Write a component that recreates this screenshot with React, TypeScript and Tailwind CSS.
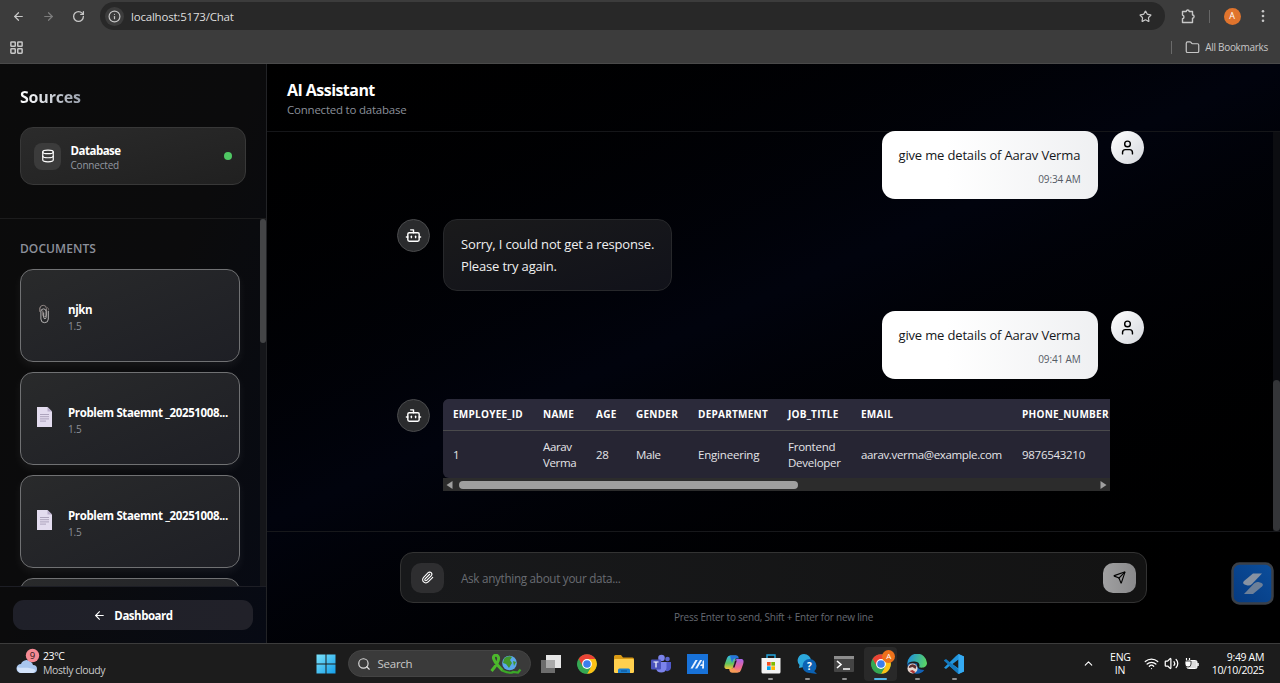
import React from "react";
import {
  ArrowLeft,
  ArrowRight,
  Bot,
  ChevronUp,
  Database,
  Folder,
  Info,
  LayoutGrid,
  Paperclip,
  RotateCw,
  Search,
  Send,
  Star,
  User,
  Volume2,
  Wifi,
} from "lucide-react";

function BrowserBar() {
  return (
    <header className="flex h-16 shrink-0 flex-col border-b border-[#4a4a4a] bg-[#3c3c3c] text-[#c7c7c7]">
      <div className="flex h-8 items-center">
        <div className="flex w-[100px] shrink-0 items-center gap-[17px] pl-[12px]">
          <ArrowLeft size={13} strokeWidth={2.2} />
          <ArrowRight size={13} strokeWidth={2.2} className="text-[#7d7d7d]" />
          <RotateCw size={13} strokeWidth={2.4} />
        </div>
        <div className="flex h-7 w-[1065px] shrink-0 items-center rounded-full bg-[#282828] pr-[13px] pl-[5px]">
          <span className="flex h-[19px] w-[19px] items-center justify-center rounded-full bg-[#3c3c3c]">
            <Info size={13} strokeWidth={2.2} />
          </span>
          <span className="ml-[7px] flex-1 pt-px text-[11.5px] tracking-[-0.2px] text-[#dedede]">
            localhost:5173/Chat
          </span>
          <Star size={13} strokeWidth={2.2} />
        </div>
        <div className="flex flex-1 items-center pl-[15.5px]">
          <svg width="15" height="15" viewBox="0 0 15 15" fill="none" stroke="#c7c7c7" strokeWidth="1.4">
            <path d="M1.500 2.500h3.700a1.500 1.500 0 0 1 3 0h3.300v3.500a1.500 1.500 0 0 1 0 3.200v4.300h-10v-3.700a1.900 1.900 0 0 0 0-3.700z" strokeLinejoin="round" />
          </svg>
          <span className="ml-[13px] h-[13px] w-px bg-[#666]" />
          <span className="ml-[14px] flex h-[17px] w-[17px] items-center justify-center rounded-full bg-[#e0742d] text-[9px] text-white">
            A
          </span>
          <svg className="ml-[20px]" width="4" height="14" fill="#c7c7c7">
            <circle cx="2" cy="2.3" r="1.3" />
            <circle cx="2" cy="7" r="1.3" />
            <circle cx="2" cy="11.7" r="1.3" />
          </svg>
        </div>
      </div>
      <div className="flex flex-1 items-center pr-3 pb-px pl-[9px]">
        <LayoutGrid size={15} strokeWidth={2.4} />
        <span className="ml-auto h-[13px] w-px bg-[#6a6a6a]" />
        <Folder size={15} strokeWidth={1.9} className="mr-[5px] ml-[13px]" />
        <span className="text-[10px] tracking-[-0.3px]">All Bookmarks</span>
      </div>
    </header>
  );
}

function PageIcon() {
  return (
    <svg width="15" height="20" viewBox="0 0 15 20">
      <path d="M0 0h10.500l4.500 4.500v15.500h-15z" fill="#e3dcef" />
      <path d="M10.500 0v4.500h4.500z" fill="#b9aecb" />
      <path d="M3 7.500h9M3 9.700h9M3 11.900h9M3 14.100h6" stroke="#9e94ae" strokeWidth="0.800" />
    </svg>
  );
}

function ClipsIcon() {
  return (
    <svg width="15" height="20" viewBox="0 0 15 20" fill="none" strokeWidth="1">
      <path d="M3 8V4.500a3.200 3.200 0 0 1 6.400 0V11a1.800 1.800 0 0 1-3.600 0V6.500" stroke="#8f8583" />
      <path d="M11.300 7v8a3.700 3.700 0 0 1-7.400 0V7.500a2.600 2.600 0 0 1 5.200 0v6a1.200 1.200 0 0 1-2.400 0V8.500" stroke="#b4b2b2" />
      <path d="M2.500 3.500v4M10 3.500a2 2 0 0 1 1.300 3" stroke="#776e6c" />
    </svg>
  );
}

const documents = [
  { name: "njkn", size: "1.5", clip: true },
  { name: "Problem Staemnt _20251008...", size: "1.5", clip: false },
  { name: "Problem Staemnt _20251008...", size: "1.5", clip: false },
];

const cardClass =
  "flex h-[93px] shrink-0 items-center rounded-[13px] border border-[#707173] bg-gradient-to-br from-[#292a2b] to-[#1e1f25] pl-[16px] shadow-[0_4px_10px_rgba(255,255,255,0.06)]";

function Sidebar() {
  return (
    <aside className="flex w-[267px] shrink-0 flex-col border-r border-[#222326] bg-gradient-to-br from-[#0b0b0b] via-[#0b0b0c] to-[#070a14]">
      <section className="h-[155px] shrink-0 border-b border-[#1c1c1d] px-5 pt-[20px]">
        <h2 className="w-fit bg-gradient-to-r from-white to-[#9ca3af] bg-clip-text text-[16px] leading-[26px] font-bold tracking-[-0.2px] text-transparent">
          Sources
        </h2>
        <div className="mt-[17px] flex h-[58px] w-[226px] items-center rounded-[13px] border border-[#383838] bg-gradient-to-br from-[#2b2b2b] to-[#202020] px-[13px]">
          <div className="flex h-[27px] w-[27px] items-center justify-center rounded-[8px] bg-[#3b3b3b]">
            <Database size={14} className="text-white" />
          </div>
          <div className="ml-[9.500px] flex-1 pt-[2px]">
            <p className="text-[11.500px] leading-[16px] font-bold tracking-[-0.5px] text-white">Database</p>
            <p className="text-[10px] leading-[13px] tracking-[-0.2px] text-[#9297a0]">Connected</p>
          </div>
          <span className="h-2 w-2 rounded-full bg-[#4fc763]" />
        </div>
      </section>
      <section className="flex min-h-0 flex-1 overflow-hidden">
        <div className="flex-1 px-5 pt-[21px]">
          <h3 className="text-[12px] leading-[18px] font-semibold tracking-[0.080px] text-[#8b909a]">DOCUMENTS</h3>
          <div className="mt-[11px] flex w-[220px] flex-col gap-[10px]">
            {documents.map((doc, i) => (
              <div key={i} className={cardClass}>
                <div className="flex w-[31px] shrink-0 pb-[3px]">{doc.clip ? <ClipsIcon /> : <PageIcon />}</div>
                <div className="w-[162px] pt-[3px] whitespace-nowrap">
                  <p className="text-[11.500px] leading-[17px] font-bold tracking-[-0.380px] text-white">{doc.name}</p>
                  <p className="pt-px text-[10px] leading-[15px] tracking-[-0.2px] text-[#8d9097]">{doc.size}</p>
                </div>
              </div>
            ))}
            <div className={cardClass} />
          </div>
        </div>
        <div className="w-[7px] bg-[#15161a]">
          <div className="h-[124px] rounded-full bg-[#444547]" />
        </div>
      </section>
      <footer className="h-[57px] shrink-0 border-t border-[#1d1e25] pt-[13px] pl-[13px]">
        <button className="flex h-[30px] w-[240px] items-center justify-center gap-[8px] rounded-[11px] bg-gradient-to-r from-[#1f2029] to-[#212129] pt-px text-[11.500px] font-bold tracking-[-0.480px] text-white">
          <ArrowLeft size={13} />
          Dashboard
        </button>
      </footer>
    </aside>
  );
}

function UserMessage({ text, time }: { text: string; time: string }) {
  return (
    <div className="flex justify-end gap-[13px]">
      <div className="h-[68px] w-[216px] rounded-[13px] bg-gradient-to-r from-white from-30% to-[#eff0f2] pt-[13px] pr-[17px] pl-[17px] whitespace-nowrap">
        <p className="text-[13px] leading-[22px] tracking-[-0.160px] text-[#15171b]">{text}</p>
        <p className="mt-[6px] text-right text-[10px] leading-[15px] tracking-[-0.150px] text-[#555b66]">{time}</p>
      </div>
      <div className="flex h-[33px] w-[33px] items-center justify-center rounded-full bg-gradient-to-br from-white to-[#d5d8dd]">
        <User size={17} className="text-black" />
      </div>
    </div>
  );
}

function BotAvatar() {
  return (
    <div className="flex h-[33px] w-[33px] shrink-0 items-center justify-center rounded-full border border-[#4a4b4d] bg-[#2a2b2d]">
      <Bot size={17} className="text-white" />
    </div>
  );
}

function ResultTable() {
  return (
    <div className="w-[667px] overflow-hidden text-white">
      <div className="rounded-bl-[6px] rounded-tl-[6px] bg-[#262533]">
        <div className="grid h-[32px] grid-cols-[90px_53px_40px_62px_90px_73px_161px_98px] items-center rounded-tl-[6px] border-b border-[#4a4a4c] bg-[#2b2a3a] text-[10px] font-bold tracking-[0.250px] whitespace-nowrap">
          {["EMPLOYEE_ID", "NAME", "AGE", "GENDER", "DEPARTMENT", "JOB_TITLE", "EMAIL", "PHONE_NUMBER"].map((h) => (
            <span key={h} className="pl-[10px]">
              {h}
            </span>
          ))}
        </div>
        <div className="grid h-[47.500px] grid-cols-[90px_53px_40px_62px_90px_73px_161px_98px] items-center pt-[2px] text-[11.500px] leading-[16.500px] tracking-[-0.350px] whitespace-nowrap text-[#e4e4e8]">
          <span className="pl-[10px]">1</span>
          <span className="pl-[10px]">
            Aarav
            <br />
            Verma
          </span>
          <span className="pl-[10px]">28</span>
          <span className="pl-[10px]">Male</span>
          <span className="pl-[10px] tracking-[-0.2px]">Engineering</span>
          <span className="pl-[10px] tracking-[-0.250px]">
            Frontend
            <br />
            Developer
          </span>
          <span className="pl-[10px]">aarav.verma@example.com</span>
          <span className="pl-[10px] tracking-[-0.280px]">9876543210</span>
        </div>
      </div>
      <div className="flex h-[13px] items-center bg-[#2c2c2c] px-[3px]">
        <svg width="7" height="8">
          <path d="M6.500 0v8L0.500 4z" fill="#9f9f9f" />
        </svg>
        <div className="ml-[6px] h-[8px] w-[339px] rounded-full bg-[#9f9f9f]" />
        <svg width="7" height="8" className="ml-auto">
          <path d="M0.500 0v8l6-4z" fill="#9f9f9f" />
        </svg>
      </div>
    </div>
  );
}

function Chat() {
  return (
    <main className="flex min-w-0 flex-1 flex-col">
      <header className="h-[68px] shrink-0 border-b border-[#151619] pt-[14px] pl-[20px]">
        <h1 className="text-[16px] leading-[24px] font-bold tracking-[-0.550px] text-white">AI Assistant</h1>
        <p className="text-[11.500px] leading-[16px] tracking-[-0.220px] text-[#8a8f99]">Connected to database</p>
      </header>
      <div className="flex h-[399px] shrink-0">
        <div className="-mt-px flex flex-1 flex-col gap-5 pr-[129.500px] pl-[130px]">
          <UserMessage text="give me details of Aarav Verma" time="09:34 AM" />
          <div className="flex gap-[13px]">
            <BotAvatar />
            <div className="h-[71.500px] w-[229px] rounded-[14px] border border-[#27282b] bg-gradient-to-br from-[#1a1a1b] to-[#11121a] px-[17px] pt-[14px] text-[13px] leading-[21.500px] tracking-[-0.160px] whitespace-nowrap text-[#f0f0f0]">
              Sorry, I could not get a response.
              <br />
              Please try again.
            </div>
          </div>
          <UserMessage text="give me details of Aarav Verma" time="09:41 AM" />
          <div className="flex gap-[13px]">
            <BotAvatar />
            <ResultTable />
          </div>
        </div>
        <div className="flex w-[7px] items-end bg-[#0c0d11]">
          <div className="h-[151px] w-full rounded-full bg-[#343538]" />
        </div>
      </div>
      <footer className="relative flex flex-1 flex-col border-t border-[#17181b] pt-[20px] pl-[133px]">
        <div className="flex h-[51px] w-[747px] items-center rounded-[13px] border border-[#333] bg-gradient-to-r from-[#18191b] to-[#131313] px-[10px]">
          <span className="flex h-[30px] w-[33px] items-center justify-center rounded-[10px] bg-[#2e2e30]">
            <Paperclip size={13} className="text-white" />
          </span>
          <span className="ml-[17px] flex-1 pt-[2px] text-[11.700px] tracking-[-0.300px] text-[#696c72]">
            Ask anything about your data...
          </span>
          <span className="flex h-[30px] w-[33px] items-center justify-center rounded-[10px] bg-gradient-to-r from-[#a0a0a1] to-[#89898b]">
            <Send size={13} className="text-black" />
          </span>
        </div>
        <p className="mt-[6px] w-[747px] text-center text-[10px] leading-[16px] tracking-[-0.230px] text-[#666a72]">
          Press Enter to send, Shift + Enter for new line
        </p>
        <svg className="absolute top-[30px] right-[6px]" width="43" height="43" viewBox="0 0 43 43">
          <defs>
            <linearGradient id="badge" x1="0" y1="1" x2="1" y2="0">
              <stop offset="0" stopColor="#063a80" />
              <stop offset="1" stopColor="#0b4e9c" />
            </linearGradient>
          </defs>
          <rect x="1.500" y="1.500" width="40" height="40" rx="7" fill="url(#badge)" stroke="#3b4048" strokeWidth="2.500" />
          <path d="M22 11.500h9l-10 10.500q-2 2-4.500 1.500l-3-1q-2.500-1.500-.5-3.500z" fill="#8792a2" />
          <path d="M22 32h-9l10-10.500q2-2 4.500-1.500l3 1q2.500 1.500.5 3.500z" fill="#6c7f98" />
        </svg>
      </footer>
    </main>
  );
}

function ChromeLogo() {
  return (
    <svg width="20" height="20" viewBox="0 0 20 20">
      <circle cx="10" cy="10" r="9.800" fill="#35a853" />
      <path d="M10 10L1.500 5.100A9.800 9.800 0 0 1 18.500 5.100H10z" fill="#ea4335" />
      <path d="M18.500 5.100A9.800 9.800 0 0 1 10 19.800L14.240 12.450 10 5.100z" fill="#fbc116" />
      <path d="M1.500 5.100l4.260 7.350L10 10V5.100z" fill="#ea4335" />
      <path d="M1.500 5.100A9.800 9.800 0 0 0 10 19.800l4.240-7.350H5.760z" fill="#35a853" />
      <circle cx="10" cy="10" r="4.900" fill="#fff" />
      <circle cx="10" cy="10" r="3.800" fill="#3b7ded" />
    </svg>
  );
}

function AppIcon({ children, mark }: { children: React.ReactNode; mark?: "open" | "active" }) {
  return (
    <div
      className={
        mark === "active"
          ? "relative flex h-[34px] w-[33px] items-center justify-center rounded-[4px] bg-[#292929]"
          : "relative flex h-[34px] w-[33px] items-center justify-center"
      }
    >
      {children}
      {mark === "open" && <span className="absolute bottom-[1px] h-[2px] w-[5px] rounded-full bg-[#8f8f8f]" />}
      {mark === "active" && <span className="absolute bottom-[1px] h-[2px] w-[13px] rounded-full bg-[#52b7e8]" />}
    </div>
  );
}

function Taskbar() {
  return (
    <footer className="flex h-[40px] shrink-0 items-center border-t border-[#3c3c3c] bg-[#1c1c1c] text-white">
      <div className="flex w-[316px] shrink-0 items-center pl-[16px]">
        <svg width="24" height="27" viewBox="0 0 24 27" className="-mt-[5px]">
          <path d="M5 25a4.500 4.500 0 0 1 0-9 6 6 0 0 1 10-2 5 5 0 0 1 2 3 4 4 0 0 1 0 8z" fill="#a9c6ee" />
          <path d="M5 25a4.500 4.500 0 0 1-3.500-6c4 2 11-1 18 3a4 4 0 0 1-2.500 3z" fill="#d3e3fa" />
          <circle cx="16.500" cy="7.500" r="6.700" fill="#f58a94" />
          <text x="16.500" y="11" textAnchor="middle" fontSize="9.500" fill="#2b1719">9</text>
        </svg>
        <div className="ml-[3px] text-[10.500px] leading-[13.500px] tracking-[-0.400px]">
          <p>23°C</p>
          <p className="text-[#c9c9c9]">Mostly cloudy</p>
        </div>
      </div>
      <svg width="20" height="20" viewBox="0 0 20 20">
        <defs>
          <linearGradient id="win" x1="0" y1="0" x2="1" y2="1">
            <stop offset="0" stopColor="#7be2fb" />
            <stop offset="1" stopColor="#149ee8" />
          </linearGradient>
        </defs>
        <path d="M0.500 0.500h9v9h-9zM10.500 0.500h9v9h-9zM0.500 10.500h9v9h-9zM10.500 10.500h9v9h-9z" fill="url(#win)" />
      </svg>
      <div className="ml-[11.500px] flex h-[27px] w-[183px] items-center rounded-full border border-[#444] bg-[#3a3a3a] pl-[8px]">
        <Search size={14} className="text-[#ddd]" />
        <span className="ml-[7px] text-[11.500px] tracking-[-0.250px] text-[#c9c9c9]">Search</span>
        <svg className="mr-[8px] ml-auto" width="34" height="20" viewBox="0 0 34 20">
          <path d="M3.500 17C7 13 11.500 8 10.500 3.500 9.500 0 5 .8 5.500 4c.5 4 4 7 9 12.500" fill="none" stroke="#4cb82c" strokeWidth="3" />
          <path d="M14 16.500c6 2.500 9 3 11 1.500l5 .5 2.500-3" fill="none" stroke="#3ba827" strokeWidth="2.200" />
          <circle cx="21.500" cy="9" r="7.300" fill="#5aa7ea" />
          <path d="M16 5c2-3 6-3.500 8-2l-2 3 2 3-3 5-3-4-3-1zM25 7l3 1-2 4z" fill="#43962b" />
        </svg>
      </div>
      <div className="ml-[3.500px] flex items-center gap-[3.700px]">
        <AppIcon>
          <svg width="20" height="19" viewBox="0 0 20 19">
            <rect x="5" y="1" width="15" height="13" fill="#e6e6e6" />
            <rect x="0" y="6" width="14" height="13" fill="#6d6d6d" />
            <rect x="5" y="6" width="9" height="8" fill="#aaa" />
          </svg>
        </AppIcon>
        <AppIcon>
          <ChromeLogo />
        </AppIcon>
        <AppIcon>
          <svg width="20" height="18" viewBox="0 0 20 18">
            <path d="M0 1.500Q0 0 1.500 0h5.500l2 2.500h9.500Q20 2.500 20 4v6H0z" fill="#d99a15" />
            <rect y="4" width="20" height="14" rx="1.200" fill="#ffd04e" />
            <path d="M4 18v-3q0-1.500 1.500-1.500h9Q16 13.500 16 15v3z" fill="#1a7fd0" />
            <rect x="7" y="15.500" width="6" height="1" fill="#0c4f8d" />
          </svg>
        </AppIcon>
        <AppIcon>
          <svg width="20" height="20" viewBox="0 0 20 20">
            <circle cx="16.500" cy="5" r="2.300" fill="#5c66cc" />
            <circle cx="10.500" cy="4" r="3.300" fill="#7b83eb" />
            <path d="M13 8h7v6a4 4 0 0 1-5 3z" fill="#5059c9" />
            <path d="M5 8h10.500v6a5.300 5.300 0 0 1-10.500 0z" fill="#7b83eb" />
            <rect x="0" y="5.500" width="10" height="10" rx="1" fill="#4b53bc" />
            <path d="M2.500 8h5M5 8v5.500" stroke="#fff" strokeWidth="1.200" />
          </svg>
        </AppIcon>
        <AppIcon>
          <svg width="21" height="20" viewBox="0 0 21 20">
            <rect width="21" height="20" fill="#1872d9" />
            <path d="M3.500 14.500L8.500 6h2.200l-5 8.500z" fill="#e8f2ff" />
            <path d="M8 14.500L13 6h2.200l-5 8.500z" fill="#e8f2ff" />
            <path d="M15.500 7.500L17 6v8.500h-2l.3-2.500h-2.300l1-1.700h1.500z" fill="#e8f2ff" />
          </svg>
        </AppIcon>
        <AppIcon>
          <svg width="20" height="20" viewBox="0 0 20 20">
            <defs>
              <linearGradient id="cpa" x1="0" y1="0" x2="0" y2="1">
                <stop offset="0" stopColor="#2eb8ed" />
                <stop offset=".6" stopColor="#63c45a" />
                <stop offset="1" stopColor="#f5c43a" />
              </linearGradient>
              <linearGradient id="cpb" x1="0" y1="0" x2="0" y2="1">
                <stop offset="0" stopColor="#a865ed" />
                <stop offset=".6" stopColor="#ed6795" />
                <stop offset="1" stopColor="#f79b57" />
              </linearGradient>
            </defs>
            <path d="M6 1.500h6.500L9 13.500q-.5 1.500-2 1.500H3C0 15 0 12.500 1 9.500L3 4q.8-2.500 3-2.500z" fill="url(#cpa)" />
            <path d="M6 1.500h6.500c1.500 0 2 1 2.300 3H10.500q-1 0-1.500 1.500l-1 3z" fill="#2775dc" />
            <path d="M14 18.500H7.500L11 6.500Q11.500 5 13 5h4c3 0 3 2.500 2 5.500L17 16q-.8 2.500-3 2.500z" fill="url(#cpb)" />
            <path d="M14 18.500H7.500c-1.500 0-2-1.500-2.300-3.500H7q1.500 0 2-1.500z" fill="#f79b57" />
            <path d="M9 13.500l2.200-7h1.600l-2.300 7z" fill="#1c1c1c" />
          </svg>
        </AppIcon>
        <AppIcon mark="open">
          <svg width="20" height="20" viewBox="0 0 20 20">
            <path d="M6 5V1h8v4" fill="none" stroke="#23a5dd" strokeWidth="1.400" />
            <path d="M.5 4h19v14q0 1.500-1.500 1.500H2Q.5 19.500.5 18z" fill="#f3f3f3" />
            <path d="M6 8h3.700v3.700H6z" fill="#f25022" />
            <path d="M10.300 8H14v3.700h-3.700z" fill="#7fba00" />
            <path d="M6 12.300h3.700V16H6z" fill="#00a4ef" />
            <path d="M10.300 12.300H14V16h-3.700z" fill="#ffb900" />
          </svg>
        </AppIcon>
        <AppIcon mark="open">
          <svg width="20" height="20" viewBox="0 0 20 20">
            <path d="M7 0a7 6.500 0 0 1 0 13l-5 1 .5-3A6.500 6.500 0 0 1 7 0z" fill="#2ca8dc" />
            <circle cx="12.500" cy="12" r="7" fill="#0b62b4" />
            <path d="M16 16l4 4-7-1z" fill="#0b62b4" />
            <text x="12.500" y="15.500" textAnchor="middle" fontSize="10" fontWeight="700" fill="#fff">?</text>
          </svg>
        </AppIcon>
        <AppIcon mark="open">
          <svg width="20" height="16" viewBox="0 0 20 16">
            <rect width="20" height="16" rx="1" fill="#444" />
            <rect width="20" height="3" fill="#8c8c8c" />
            <path d="M3 5l4 3.500L3 12M9 13h7" fill="none" stroke="#fff" strokeWidth="1.600" />
          </svg>
        </AppIcon>
        <AppIcon mark="active">
          <ChromeLogo />
          <span className="absolute top-[3px] right-[2px] flex h-[13px] w-[13px] items-center justify-center rounded-full bg-[#ee711b] text-[8px]">
            A
          </span>
        </AppIcon>
        <AppIcon mark="open">
          <svg width="20" height="20" viewBox="0 0 20 20">
            <defs>
              <linearGradient id="edge" x1="0" y1="0.300" x2="1" y2="0.500">
                <stop offset="0" stopColor="#1c8fe0" />
                <stop offset="1" stopColor="#5ad564" />
              </linearGradient>
            </defs>
            <path d="M.3 9.500h10c-1 3 1 6.500 7 6.500-2 3-5 4-8 3.700A10 10 0 0 1 .3 9.500z" fill="#1261b4" />
            <path d="M.3 10A9.800 9.800 0 0 1 20 9c0 4-4 5.500-8 4.300 1-2 .5-5-3-5.500C5 7 2 8 .3 10z" fill="url(#edge)" />
            <circle cx="5.500" cy="14.500" r="5" fill="#ead9d2" />
            <path d="M1.500 13q3-5 8-1l-1 3-3-2-3 1z" fill="#5f3030" />
            <path d="M2.500 17l3-1 3 2-2 1.500z" fill="#a33" />
          </svg>
        </AppIcon>
        <AppIcon mark="open">
          <svg width="20" height="20" viewBox="0 0 20 20">
            <path d="M14.500 0L20 2.500v15L14.500 20 5.500 12 2 15 0 13.800 12 2zM14.500 5.500L8.500 10l6 4.500z" fillRule="evenodd" fill="#2295dd" />
            <path d="M0 6.200L2 5l12.500 10.500V20L0 6.800z" fill="#1479bf" />
            <path d="M14.500 0L20 2.500v15L14.500 20z" fill="#35aaf2" />
          </svg>
        </AppIcon>
      </div>
      <div className="ml-auto flex items-center pr-[16px] text-[10.500px] leading-[13px] tracking-[-0.2px]">
        <ChevronUp size={13} />
        <div className="ml-[15px] w-[20px] text-center whitespace-nowrap">
          <p>ENG</p>
          <p>IN</p>
        </div>
        <Wifi size={15} className="ml-[14px]" />
        <Volume2 size={15} className="ml-[5px]" />
        <svg width="15" height="14" viewBox="0 0 15 14" className="ml-[5px]">
          <rect x="3" y="3.500" width="10" height="8" rx="1.500" fill="#ddd" stroke="#fff" />
          <path d="M14 6v3" stroke="#fff" strokeWidth="1.500" />
          <path d="M1 4h6v3a3 3 0 0 1-6 0zM2.500 4V1M5.500 4V1" fill="#fff" stroke="#1c1c1c" strokeWidth=".8" />
          <path d="M2.500 3.500V1M5.500 3.500V1" stroke="#fff" strokeWidth="1.200" />
        </svg>
        <div className="ml-[12px] w-[53px] text-right tracking-[-0.350px] whitespace-nowrap">
          <p>9:49 AM</p>
          <p>10/10/2025</p>
        </div>
      </div>
    </footer>
  );
}

export default function App() {
  return (
    <div className="flex h-[683px] w-[1280px] flex-col overflow-hidden bg-black font-['Open_Sans','Noto_Sans',sans-serif]">
      <BrowserBar />
      <div className="flex h-[579px] shrink-0 bg-gradient-to-br from-black via-[#01030d] to-black">
        <Sidebar />
        <Chat />
      </div>
      <Taskbar />
    </div>
  );
}
